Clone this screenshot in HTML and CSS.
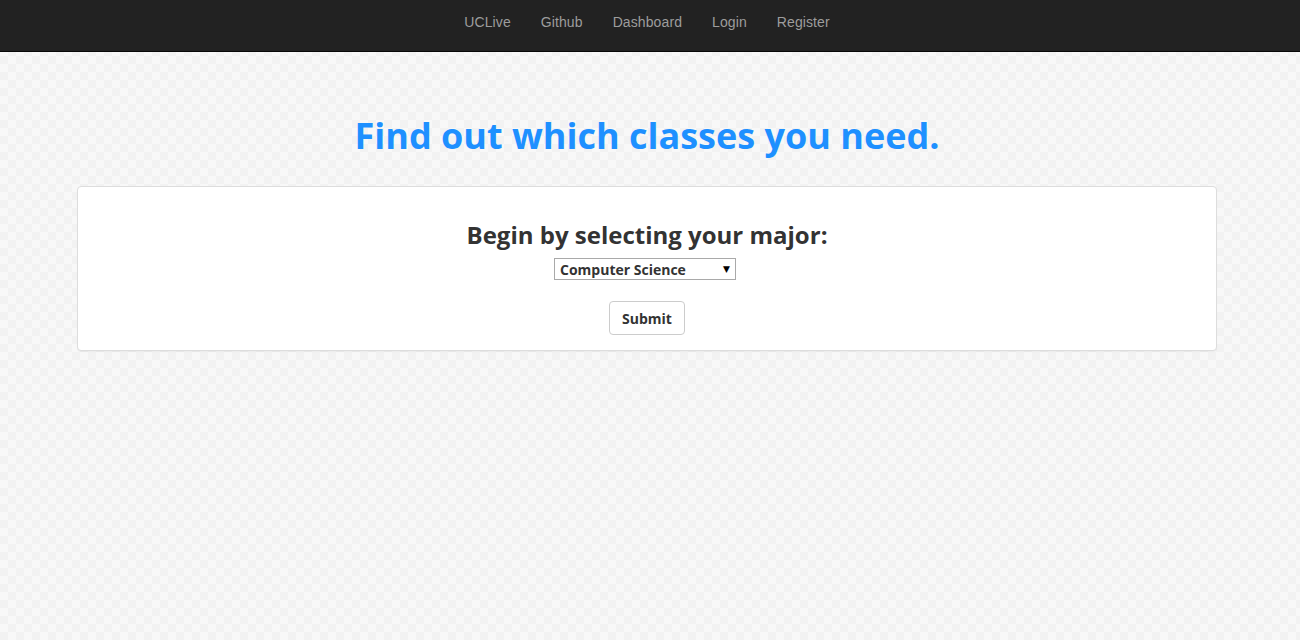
FILE: index.html
```html
<!DOCTYPE html>
<html lang="en">
<head>
<meta charset="utf-8">
<title>Find out which classes you need</title>
<link rel="stylesheet" href="styles.css">
</head>
<body>
<nav class="navbar">
  <ul class="nav">
    <li><a href="#">UCLive</a></li>
    <li><a href="#">Github</a></li>
    <li><a href="#">Dashboard</a></li>
    <li><a href="#">Login</a></li>
    <li><a href="#">Register</a></li>
  </ul>
</nav>
<main class="container">
  <h1 class="title">Find out which classes you need.</h1>
  <section class="panel">
    <h3 class="panel-heading">Begin by selecting your major:</h3>
    <form class="major-form">
      <div class="select-wrap">
        <select class="major-select">
          <option>Computer Science</option>
        </select>
      </div>
      <button type="button" class="btn">Submit</button>
    </form>
  </section>
</main>
</body>
</html>
```

FILE: styles.css
```css
* { box-sizing: border-box; }
html, body { margin: 0; padding: 0; }
body {
  font-family: "Open Sans", "Liberation Sans", sans-serif;
  color: #333;
  min-height: 640px;
  background-color: #f7f7f7;
  background-image: conic-gradient(#f2f2f2 0 25%, #f8f8f8 0 50%, #f2f2f2 0 75%, #f8f8f8 0);
  background-size: 16px 16px;
}
.navbar {
  height: 52px;
  background: #222;
  border-bottom: 1px solid #080808;
}
.nav {
  list-style: none;
  margin: 0 6px 0 0;
  padding: 0;
  display: flex;
  justify-content: center;
}
.nav a {
  display: block;
  padding: 12px 15px 15px;
  line-height: 20px;
  font-family: "Liberation Sans", Arial, sans-serif;
  font-size: 14px;
  letter-spacing: 0.1px;
  color: #9d9d9d;
  text-decoration: none;
}
.container {
  width: 1140px;
  margin: 0 auto;
  position: relative;
  left: -3px;
}
.title {
  margin: 57px 0 0;
  text-align: center;
  font-size: 36px;
  line-height: 54px;
  font-weight: 700;
  color: #1e90ff;
}
.panel {
  margin-top: 23px;
  background: #fff;
  border: 1px solid #ddd;
  border-radius: 4px;
  box-shadow: 0 1px 1px rgba(0,0,0,.05);
  padding: 31px 15px 15px;
  text-align: center;
}
.panel-heading {
  margin: 0;
  font-size: 24px;
  line-height: 34px;
  font-weight: 700;
}
.major-form {
  display: flex;
  flex-direction: column;
  align-items: center;
}
.select-wrap {
  position: relative;
  margin-top: 6px;
  margin-right: 4px;
}
.select-wrap::after {
  content: "\25BC";
  position: absolute;
  right: 6px;
  top: 6px;
  font-size: 9px;
  color: #000;
  pointer-events: none;
  font-family: "DejaVu Sans", sans-serif;
}
.major-select {
  display: block;
  appearance: none;
  -webkit-appearance: none;
  width: 182px;
  height: 22px;
  padding: 0 5px;
  border: 1px solid #a9a9a9;
  border-radius: 0;
  background: #fff;
  font-family: "Open Sans", sans-serif;
  font-weight: 700;
  font-size: 14px;
  color: #333;
}
.btn {
  margin-top: 21px;
  width: 76px;
  height: 34px;
  padding: 6px 12px;
  border: 1px solid #ccc;
  border-radius: 4px;
  background: #fff;
  font-family: "Open Sans", sans-serif;
  font-weight: 700;
  font-size: 14px;
  color: #333;
}
```
